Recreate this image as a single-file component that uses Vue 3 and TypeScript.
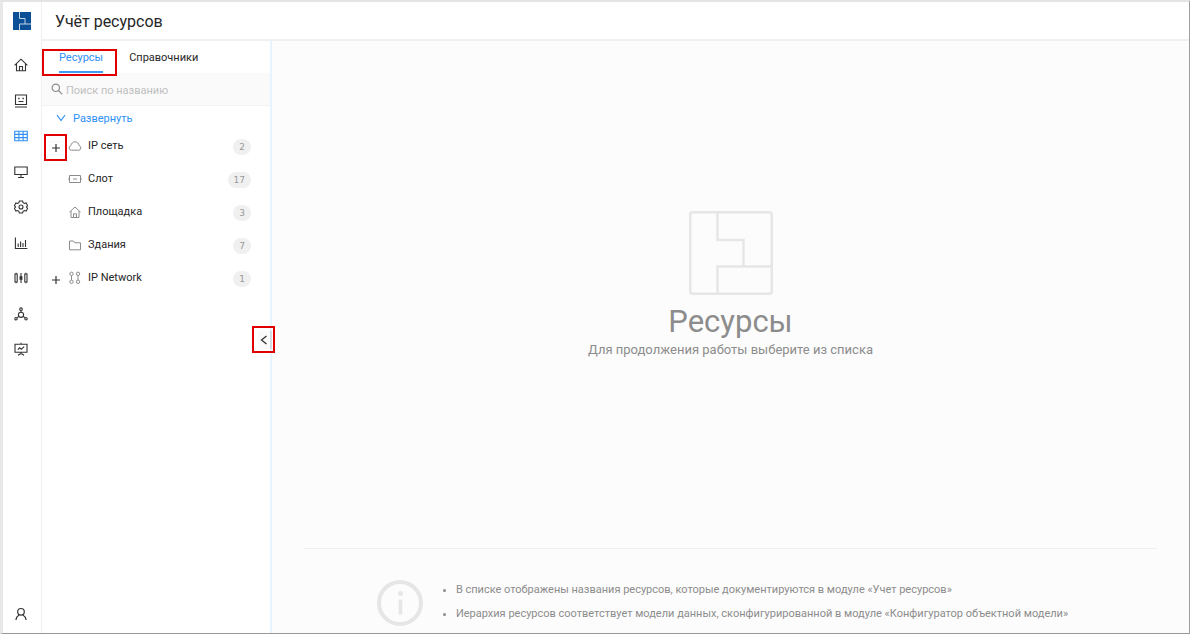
<script setup lang="ts">
import { ref } from 'vue'

interface NavItem {
  id: string
  label: string
}

interface ResourceNode {
  id: number
  name: string
  icon: 'cloud' | 'slot' | 'home' | 'folder' | 'network'
  count: number
  expandable: boolean
  marked?: boolean
}

const navItems: NavItem[] = [
  { id: 'home', label: 'Главная' },
  { id: 'server', label: 'Оборудование' },
  { id: 'table', label: 'Учёт ресурсов' },
  { id: 'monitor', label: 'Мониторинг' },
  { id: 'settings', label: 'Настройки' },
  { id: 'chart', label: 'Отчёты' },
  { id: 'sliders', label: 'Параметры' },
  { id: 'topology', label: 'Топология' },
  { id: 'board', label: 'Панели' },
]

const nodes: ResourceNode[] = [
  { id: 1, name: 'IP сеть', icon: 'cloud', count: 2, expandable: true, marked: true },
  { id: 2, name: 'Слот', icon: 'slot', count: 17, expandable: false },
  { id: 3, name: 'Площадка', icon: 'home', count: 3, expandable: false },
  { id: 4, name: 'Здания', icon: 'folder', count: 7, expandable: false },
  { id: 5, name: 'IP Network', icon: 'network', count: 1, expandable: true },
]

const notes: string[] = [
  'В списке отображены названия ресурсов, которые документируются в модуле «Учет ресурсов»',
  'Иерархия ресурсов соответствует модели данных, сконфигурированной в модуле «Конфигуратор объектной модели»',
]

const activeNav = ref('table')
const activeTab = ref<'resources' | 'catalogs'>('resources')
const query = ref('')
</script>

<template>
  <div class="app">
    <nav class="rail" aria-label="Разделы">
      <a class="brand" href="#" aria-label="На главную">
        <svg viewBox="0 0 18 18" width="18" height="18">
          <rect width="18" height="18" fill="#0b4f96" />
          <path d="M6.500 0v6.500h5.500v5.500h6M6.500 18v-6h5.500" fill="none" stroke="#c3d5e8" stroke-width="1" />
        </svg>
      </a>
      <div class="sections">
        <button
          v-for="item in navItems"
          :key="item.id"
          type="button"
          class="nav"
          :class="{ active: item.id === activeNav }"
          :aria-label="item.label"
          @click="activeNav = item.id"
        >
          <svg viewBox="0 0 14 14" width="14" height="14" fill="none" stroke="currentColor" stroke-width="1.100">
            <template v-if="item.id === 'home'">
              <path d="M.6 7.400 7 1.200l6.400 6.200M2.500 6v6.800h9V6M5.500 12.800V8.500h3v4.300" />
            </template>
            <template v-else-if="item.id === 'server'">
              <path d="M1.500 1h11v9.500h-11zM1 13h12M4.500 7.500h5" />
              <path d="M4.200 4.500h1.400M8.400 4.500h1.400" stroke-width="1.400" />
            </template>
            <template v-else-if="item.id === 'table'">
              <path d="M.7 2.200h12.600v9.600H.7zM.7 5.400h12.600M.7 8.600h12.600M4.900 2.200v9.600M9.100 2.200v9.600" />
            </template>
            <template v-else-if="item.id === 'monitor'">
              <path d="M.8 2h12.400v7.500H.8zM7 9.500v3M4 12.500h6" />
            </template>
            <template v-else-if="item.id === 'settings'">
              <path d="M5.400 1h3.200l.5 1.700 1.300.8 1.700-.5 1.500 2.600L12.400 7l1.200 1.400-1.500 2.600-1.700-.5-1.300.8-.5 1.700H5.400l-.5-1.700-1.300-.8-1.700.5L.4 8.400 1.600 7 .4 5.600 1.900 3l1.700.5 1.300-.8z" />
              <circle cx="7" cy="7" r="2" />
            </template>
            <template v-else-if="item.id === 'chart'">
              <path d="M1.400 1.500v11h12M4.200 11V7.500M6.600 11V5.500M9 11V7M11.500 11V4" />
            </template>
            <template v-else-if="item.id === 'sliders'">
              <path d="M1 3h2.200v8H1zM10.800 3H13v8h-2.200zM2.100 1.800V3M2.100 11v1.200M11.900 1.800V3M11.900 11v1.200M7 2v10" />
              <path d="M6.100 5.700h1.800v2.600H6.100z" fill="currentColor" />
            </template>
            <template v-else-if="item.id === 'topology'">
              <circle cx="7" cy="2.200" r="1.300" />
              <circle cx="7" cy="7.800" r="2.600" />
              <circle cx="2" cy="11.700" r="1.200" />
              <circle cx="12" cy="11.700" r="1.200" />
              <path d="M7 3.500v1.700M4.800 9.300 3 10.900M9.200 9.300l1.800 1.600" />
            </template>
            <template v-else>
              <path d="M1 2.300h12v7.900H1zM7 .7v1.600M7 10.200v1.300M4 13.300l3-1.800 3 1.800M3.800 7.700l1.900-1.900 1.600 1.400 2.900-2.600" />
            </template>
          </svg>
        </button>
      </div>
      <button type="button" class="nav profile" aria-label="Профиль">
        <svg viewBox="0 0 14 14" width="14" height="14" fill="none" stroke="currentColor" stroke-width="1.200">
          <circle cx="7" cy="4.800" r="3.300" />
          <path d="M1.900 13c.3-2.400 1.400-4 3.200-5M12.100 13c-.3-2.400-1.400-4-3.200-5" />
        </svg>
      </button>
    </nav>

    <div class="workspace">
      <header class="header">
        <h1>Учёт ресурсов</h1>
      </header>

      <div class="body">
        <aside class="panel">
          <div class="tabs" role="tablist">
            <button
              type="button"
              role="tab"
              class="tab"
              :class="{ active: activeTab === 'resources' }"
              :aria-selected="activeTab === 'resources'"
              @click="activeTab = 'resources'"
            >
              Ресурсы
            </button>
            <button
              type="button"
              role="tab"
              class="tab"
              :class="{ active: activeTab === 'catalogs' }"
              :aria-selected="activeTab === 'catalogs'"
              @click="activeTab = 'catalogs'"
            >
              Справочники
            </button>
            <span class="marker marker-tab"></span>
          </div>

          <label class="search">
            <svg viewBox="0 0 12 12" width="12" height="12" fill="none" stroke="#8c8c8c" stroke-width="1.200">
              <circle cx="4.800" cy="4.800" r="3.700" />
              <path d="m7.500 7.500 3.800 3.800" />
            </svg>
            <input v-model="query" type="text" placeholder="Поиск по названию" aria-label="Поиск по названию" />
          </label>

          <button type="button" class="expand">
            <svg viewBox="0 0 10 8" width="10" height="8" fill="none" stroke="currentColor" stroke-width="1.200">
              <path d="m1 1 4 5.500L9 1" />
            </svg>
            Развернуть
          </button>

          <ul class="tree">
            <li v-for="node in nodes" :key="node.id" class="node">
              <span class="slot">
                <button v-if="node.expandable" type="button" class="toggle" :aria-label="'Раскрыть ' + node.name">
                  <svg viewBox="0 0 10 10" width="10" height="10" stroke="#333" stroke-width="1.200">
                    <path d="M1 5h8M5 1v8" />
                  </svg>
                </button>
                <span v-if="node.marked" class="marker marker-toggle"></span>
              </span>
              <svg class="glyph" viewBox="0 0 14 14" width="14" height="14" fill="none" stroke="#8c8c8c">
                <path
                  v-if="node.icon === 'cloud'"
                  d="M3.400 11.200h7.300a2.300 2.300 0 0 0 .5-4.500C10.900 4.400 9.200 2.800 7 2.800S3.200 4.500 2.800 6.700a2.300 2.300 0 0 0 .6 4.500z"
                />
                <path v-else-if="node.icon === 'slot'" d="M1.500 3.500h11v7h-11zM5 7h4M0 7h1.500M12.500 7H14" />
                <path v-else-if="node.icon === 'home'" d="M1.500 7.200 7 2l5.500 5.200M3 6v6.500h8V6M5.500 12.500V8.800h3v3.700" />
                <path v-else-if="node.icon === 'folder'" d="M1.500 3h4l1.300 1.800h5.700v7h-11z" />
                <g v-else>
                  <circle cx="3.500" cy="2.800" r="1.700" />
                  <circle cx="10" cy="2.800" r="1.700" />
                  <circle cx="3.500" cy="10.800" r="1.700" />
                  <circle cx="10" cy="10.800" r="1.700" />
                  <path d="M3.500 4.500v4.600M10 4.500v4.600" />
                </g>
              </svg>
              <a class="name" href="#">{{ node.name }}</a>
              <span class="count">{{ node.count }}</span>
            </li>
          </ul>

          <button type="button" class="collapse" aria-label="Свернуть панель">
            <svg viewBox="0 0 8 10" width="8" height="10" fill="none" stroke="#333" stroke-width="1.300">
              <path d="M6.500 1 1.500 5l5 4" />
            </svg>
            <span class="marker marker-collapse"></span>
          </button>
        </aside>

        <main class="main">
          <section class="hero">
            <svg viewBox="0 0 84 84" width="84" height="84" fill="none" stroke="#e6e6e6" stroke-width="2.500">
              <rect x="1.250" y="1.250" width="81.500" height="81.500" rx="2.500" />
              <path d="M28.500 1v28h26v26.500M83 55.500H28.500V83" />
            </svg>
            <h2>Ресурсы</h2>
            <p>Для продолжения работы выберите из списка</p>
          </section>
          <footer class="info">
            <svg viewBox="0 0 46 46" width="46" height="46">
              <circle cx="23" cy="23" r="21" fill="none" stroke="#e6e6e6" stroke-width="4" />
              <circle cx="23.500" cy="13.500" r="2.500" fill="#e6e6e6" />
              <path d="M23.500 19.500v15" stroke="#e6e6e6" stroke-width="3.500" />
            </svg>
            <ul>
              <li v-for="note in notes" :key="note">{{ note }}</li>
            </ul>
          </footer>
        </main>
      </div>
    </div>
  </div>
</template>

<style>
body {
  margin: 0;
}
</style>

<style scoped>
.app {
  box-sizing: border-box;
  display: flex;
  min-height: 100vh;
  border-style: solid;
  border-width: 2px 1px 1px 3px;
  border-color: #e4e4e4 #a0a0a0 #999 #e8e8e8;
  background: #fff;
  color: #262626;
  font-family: Roboto, "Liberation Sans", sans-serif;
  font-size: 11px;
}

button {
  padding: 0;
  border: 0;
  background: none;
  color: inherit;
  font: inherit;
  cursor: pointer;
}

svg {
  display: block;
  flex: none;
}

.rail {
  box-sizing: border-box;
  display: flex;
  flex-direction: column;
  align-items: center;
  flex: none;
  width: 39px;
  padding: 10px 3px 9px 0;
  border-right: 1px solid #f0f0f0;
}

.brand {
  margin: 0 0 25px 3px;
}

.sections {
  display: flex;
  flex-direction: column;
  justify-content: space-between;
  height: 304px;
}

.nav {
  display: flex;
  align-items: center;
  justify-content: center;
  height: 20px;
  width: 32px;
  color: #333;
}

.nav.active {
  color: #2f90f5;
}

.nav.profile {
  margin-top: auto;
}

.workspace {
  display: flex;
  flex: 1;
  flex-direction: column;
  min-width: 0;
}

.header {
  display: flex;
  align-items: center;
  height: 37px;
  padding: 0 13px;
  border-bottom: 2px solid #f0f0f0;
}

h1 {
  margin: 0;
  font-size: 16px;
  font-weight: 400;
  line-height: 20px;
  padding-top: 2px;
}

.body {
  display: flex;
  flex: 1;
}

.panel {
  position: relative;
  flex: none;
  width: 228px;
  border-right: 2px solid #e6f4ff;
}

.tabs {
  position: relative;
  display: flex;
  gap: 26px;
  height: 32px;
  padding-left: 17px;
}

.tab {
  padding-top: 3px;
  border-bottom: 2px solid transparent;
}

.tab.active {
  border-color: #3d9bf7;
  color: #2f90f5;
}

.marker {
  position: absolute;
  box-sizing: border-box;
  border: 2px solid #e00000;
  pointer-events: none;
}

.marker-tab {
  top: 8px;
  left: 0;
  width: 75px;
  height: 27px;
}

.search {
  display: flex;
  align-items: center;
  gap: 3px;
  height: 32px;
  padding: 0 9px;
  border-bottom: 1px solid #f3f3f3;
  background: #fafafa;
}

.search input {
  flex: 1;
  min-width: 0;
  padding: 2px 0 0;
  border: 0;
  outline: 0;
  background: none;
  color: #262626;
  font: inherit;
}

.search input::placeholder {
  color: #bfbfbf;
}

.expand {
  display: flex;
  align-items: center;
  gap: 7px;
  height: 24px;
  padding-left: 14px;
  color: #2f90f5;
}

.tree {
  margin: -1px 0 0;
  padding: 0;
  list-style: none;
}

.node {
  display: flex;
  align-items: center;
  height: 33px;
  padding: 0 19px 0 7px;
}

.slot {
  position: relative;
  display: flex;
  align-items: center;
  width: 19px;
  height: 28px;
}

.toggle {
  display: flex;
  align-items: center;
  justify-content: center;
  box-sizing: border-box;
  width: 14px;
  height: 14px;
  margin-top: 4px;
  border: 1px solid #fafafa;
}

.marker-toggle {
  top: 2px;
  left: -5px;
  width: 23px;
  height: 27px;
}

.name {
  flex: 1;
  margin-left: 6px;
  color: #262626;
  text-decoration: none;
}

.count {
  box-sizing: border-box;
  min-width: 16px;
  margin-top: 2px;
  padding: 0 6px;
  border-radius: 8px;
  background: #f0f0f0;
  color: #999;
  font-family: "DejaVu Sans", sans-serif;
  font-size: 9px;
  line-height: 16px;
  text-align: center;
}

.collapse {
  position: absolute;
  right: -2px;
  top: 290px;
  display: flex;
  align-items: center;
  width: 14px;
  height: 18px;
  padding-left: 2px;
  border-right: 2px solid #d5dde5;
  background: #fafafa;
}

.marker-collapse {
  top: -5px;
  left: -6px;
  width: 23px;
  height: 27px;
}

.main {
  display: flex;
  flex: 1;
  flex-direction: column;
  min-width: 0;
  background: #fcfcfc;
}

.hero {
  display: flex;
  flex: 1;
  flex-direction: column;
  align-items: center;
  justify-content: center;
  margin: 0 32px;
  padding-bottom: 20px;
  border-bottom: 1px solid #f0f0f0;
  color: #8c8c8c;
}

h2 {
  margin: 8px 0 0;
  font-size: 31px;
  font-weight: 400;
  line-height: 38px;
}

.hero p {
  margin: 0;
  font-size: 13px;
  line-height: 18px;
}

.info {
  display: flex;
  align-items: flex-end;
  justify-content: center;
  gap: 18px;
  padding: 29px 16px 7px 0;
  color: #8c8c8c;
}

.info ul {
  margin: 0;
  padding-left: 15px;
  line-height: 24px;
}
</style>
